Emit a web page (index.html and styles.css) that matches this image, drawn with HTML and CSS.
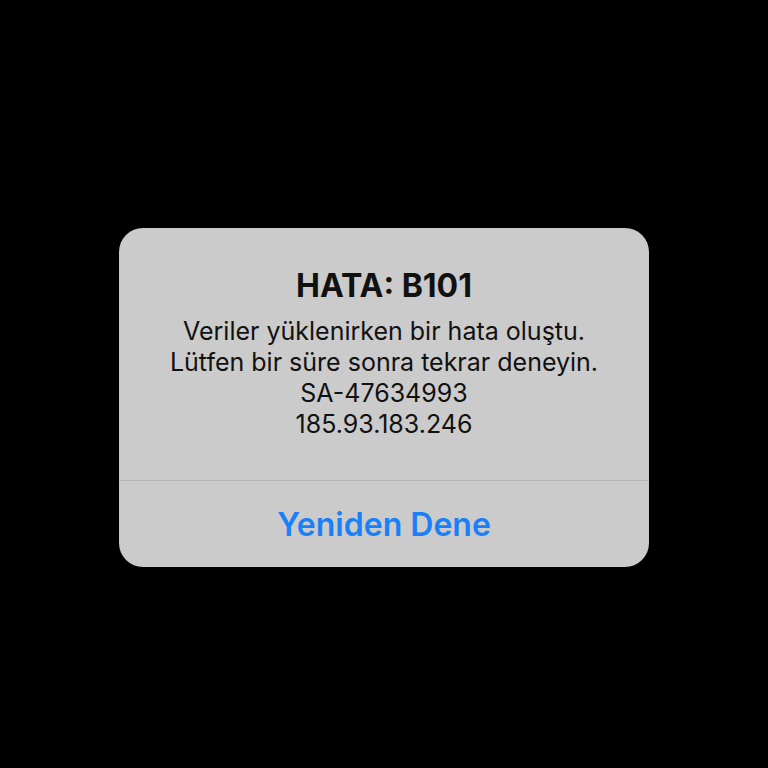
FILE: index.html
```html
<!DOCTYPE html>
<html lang="tr">
<head>
  <meta charset="UTF-8" />
  <meta name="viewport" content="width=device-width, initial-scale=1" />
  <title>Hata</title>
  <link rel="stylesheet" href="styles.css">
</head>
<body>

  <div class="alert">
    <div class="alert-body">
      <div class="alert-title">HATA: B101</div>
      <div class="alert-message">
        Veriler yüklenirken bir hata oluştu.<br>
        Lütfen bir süre sonra tekrar deneyin.<br>
        SA-47634993<br>
        185.93.183.246
      </div>
    </div>
    <button class="alert-btn">Yeniden Dene</button>
  </div>

</body>
</html>
```

FILE: styles.css
```css
html, body {
  margin: 0;
  background-color: #000;
}

body {
  font-family: Inter, "Liberation Sans", Arial, sans-serif;
  display: flex;
  justify-content: center;
  padding-top: 228px;
  min-height: 768px;
  box-sizing: border-box;
}

.alert {
  width: 530px;
  height: 339px;
  background-color: #cbcbcb;
  border-radius: 24px;
  display: flex;
  flex-direction: column;
  overflow: hidden;
}

.alert-body {
  height: 253px;
  box-sizing: border-box;
  padding: 38px 16px 0;
  text-align: center;
  color: #111;
  border-bottom: 1px solid #b4b4b4;
}

.alert-title {
  font-size: 32px;
  font-weight: 700;
  line-height: 40px;
  margin-bottom: 10px;
}

.alert-message {
  font-size: 25px;
  line-height: 31px;
}

.alert-btn {
  flex: 1;
  background: none;
  border: none;
  padding: 0;
  font-family: inherit;
  font-size: 32px;
  font-weight: 600;
  color: #1a80f8;
  cursor: pointer;
}
```
